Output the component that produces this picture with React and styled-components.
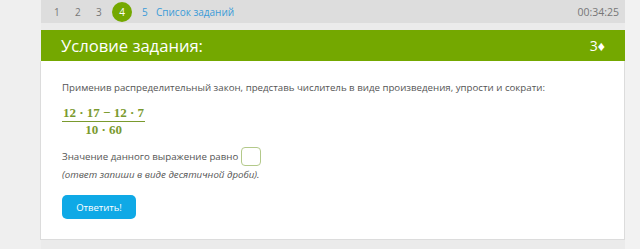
import styled, { createGlobalStyle } from "styled-components";

const Global = createGlobalStyle`
  body {
    margin: 0;
    background: #ebebeb;
    font-family: "Open Sans", "Liberation Sans", sans-serif;
  }
`;

const Page = styled.div`
  display: flex;
  min-height: 249px;
`;

const Gutter = styled.div`
  width: ${(p) => p.$w}px;
  flex: ${(p) => (p.$grow ? 1 : "none")};
  background: ${(p) => p.$bg};
`;

const Main = styled.div`
  width: 584px;
  display: flex;
  flex-direction: column;
  background: #ebebeb;
`;

const TopBar = styled.div`
  height: 23px;
  background: #dddddd;
  display: flex;
  align-items: center;
  padding: 0 6px 0 13px;
  font-size: 10px;
`;

const Num = styled.span`
  width: 21px;
  color: ${(p) => (p.$link ? "#3a9bd8" : "#777")};
`;

const Current = styled.span`
  width: 20px;
  height: 20px;
  border-radius: 50%;
  background: #74a800;
  color: #fff;
  display: inline-flex;
  align-items: center;
  justify-content: center;
  margin: 0 10px 0 -5px;
`;

const ListLink = styled.span`
  color: #3a9bd8;
  margin-left: -7px;
`;

const Timer = styled.span`
  margin-left: auto;
  color: #777;
  font-size: 10.5px;
`;

const Header = styled.div`
  margin-top: 7px;
  height: 31px;
  background: #74a800;
  color: #fff;
  display: flex;
  align-items: center;
  justify-content: space-between;
  padding: 0 20px 0 20px;
  font-size: 16.6px;
`;

const Points = styled.span`
  font-size: 14px;
`;

const Card = styled.div`
  background: #fff;
  border: 1px solid #dcdcdc;
  border-top: none;
  margin-left: -1px;
  padding: 19px 20px 20px 21px;
  color: #555;
  font-size: 9.7px;
`;

const Para = styled.div`
  line-height: 16px;
`;

const Fraction = styled.div`
  display: inline-flex;
  flex-direction: column;
  align-items: center;
  margin-top: 9px;
  color: #7a9a2e;
  font-family: "Liberation Serif", "DejaVu Serif", serif;
  font-weight: bold;
  font-size: 13px;
  line-height: 15px;
`;

const Numer = styled.span`
  padding: 0 1px 1px;
  border-bottom: 1px solid #7a9a2e;
`;

const Denom = styled.span`
  line-height: 15px;
`;

const AnswerRow = styled.div`
  display: flex;
  align-items: center;
  margin-top: 10px;
  line-height: 16px;
`;

const Box = styled.span`
  width: 18px;
  height: 17px;
  border: 1.5px solid #b3c98a;
  border-radius: 4px;
  margin-left: 3px;
`;

const Hint = styled.div`
  font-style: italic;
  line-height: 16px;
  margin-top: 1px;
`;

const Button = styled.button`
  display: block;
  margin-top: 12px;
  width: 74px;
  height: 24px;
  border: none;
  border-radius: 5px;
  background: #0fa9e6;
  color: #fff;
  font-family: "Open Sans", sans-serif;
  font-size: 9.5px;
  padding: 0;
`;

export default function App() {
  return (
    <>
      <Global />
      <Page>
        <Gutter $w={41} $bg="#efefef" />
        <Main>
          <TopBar>
            <Num>1</Num>
            <Num>2</Num>
            <Num>3</Num>
            <Current>4</Current>
            <Num $link>5</Num>
            <ListLink>Список заданий</ListLink>
            <Timer>00:34:25</Timer>
          </TopBar>
          <Header>
            <span>Условие задания:</span>
            <Points>3♦</Points>
          </Header>
          <Card>
            <Para>
              Применив распределительный закон, представь числитель в виде
              произведения, упрости и сократи:
            </Para>
            <Fraction>
              <Numer>12 · 17 − 12 · 7</Numer>
              <Denom>10 · 60</Denom>
            </Fraction>
            <AnswerRow>
              Значение данного выражение равно <Box />
            </AnswerRow>
            <Hint>(ответ запиши в виде десятичной дроби).</Hint>
            <Button>Ответить!</Button>
          </Card>
        </Main>
        <Gutter $grow $bg="#f2f2f2" />
      </Page>
    </>
  );
}
